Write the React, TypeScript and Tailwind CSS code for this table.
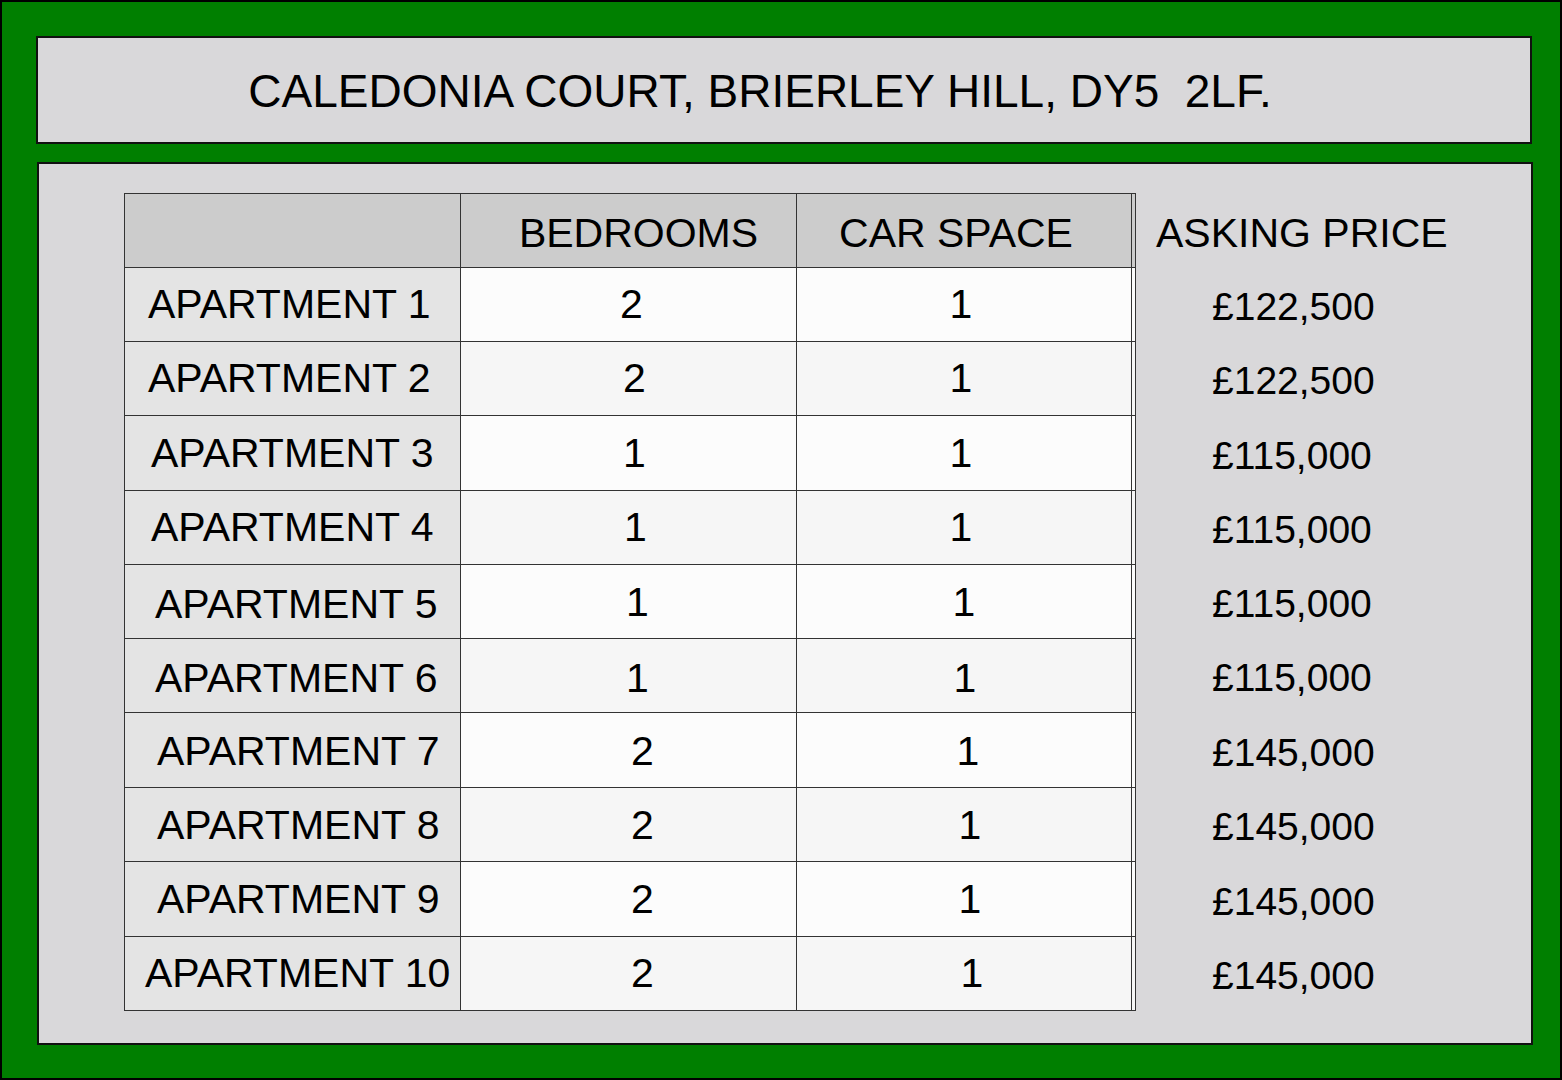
import type { ReactNode } from "react";

interface Apartment {
  name: string;
  bedrooms: string;
  car: string;
  price: string;
  height: string;
  nameCls: string;
  bedCls: string;
  carCls: string;
  rowBg: string;
}

const apartments: Apartment[] = [
  { name: "APARTMENT 1", bedrooms: "2", car: "1", price: "£122,500", height: "h-[74px]", nameCls: "pl-[23px]", bedCls: "pl-[6px]", carCls: "pr-[6px]", rowBg: "bg-[#fcfcfc]" },
  { name: "APARTMENT 2", bedrooms: "2", car: "1", price: "£122,500", height: "h-[74px]", nameCls: "pl-[23px]", bedCls: "pl-[12px]", carCls: "pr-[6px]", rowBg: "bg-[#f6f6f6]" },
  { name: "APARTMENT 3", bedrooms: "1", car: "1", price: "£115,000", height: "h-[75px]", nameCls: "pl-[26px]", bedCls: "pl-[12px]", carCls: "pr-[6px]", rowBg: "bg-[#fcfcfc]" },
  { name: "APARTMENT 4", bedrooms: "1", car: "1", price: "£115,000", height: "h-[74px]", nameCls: "pl-[26px]", bedCls: "pl-[14px]", carCls: "pr-[6px]", rowBg: "bg-[#f6f6f6]" },
  { name: "APARTMENT 5", bedrooms: "1", car: "1", price: "£115,000", height: "h-[74px]", nameCls: "pl-[30px] pt-[6px]", bedCls: "pl-[18px] pt-[2px]", carCls: "pr-[0px] pt-[2px]", rowBg: "bg-[#fcfcfc]" },
  { name: "APARTMENT 6", bedrooms: "1", car: "1", price: "£115,000", height: "h-[74px]", nameCls: "pl-[30px] pt-[6px]", bedCls: "pl-[18px] pt-[6px]", carCls: "pl-[2px] pt-[6px]", rowBg: "bg-[#f6f6f6]" },
  { name: "APARTMENT 7", bedrooms: "2", car: "1", price: "£145,000", height: "h-[75px]", nameCls: "pl-[32px] pt-[3px]", bedCls: "pl-[28px] pt-[3px]", carCls: "pl-[8px] pt-[3px]", rowBg: "bg-[#fcfcfc]" },
  { name: "APARTMENT 8", bedrooms: "2", car: "1", price: "£145,000", height: "h-[74px]", nameCls: "pl-[32px] pt-[2px]", bedCls: "pl-[28px] pt-[2px]", carCls: "pl-[12px] pt-[2px]", rowBg: "bg-[#f6f6f6]" },
  { name: "APARTMENT 9", bedrooms: "2", car: "1", price: "£145,000", height: "h-[75px]", nameCls: "pl-[32px]", bedCls: "pl-[28px]", carCls: "pl-[12px]", rowBg: "bg-[#fcfcfc]" },
  { name: "APARTMENT 10", bedrooms: "2", car: "1", price: "£145,000", height: "h-[74px]", nameCls: "pl-[20px]", bedCls: "pl-[28px]", carCls: "pl-[16px]", rowBg: "bg-[#f6f6f6]" },
];

const Cell = ({ className, children }: { className: string; children?: ReactNode }) => (
  <div className={`flex items-center border-r border-b border-[#333333] ${className}`}>{children}</div>
);

const App = () => {
  return (
    <div
      className="flex h-[1080px] w-[1562px] flex-col border-2 border-black bg-[#007f00] pt-[34px] pl-[34px] text-black"
      style={{ fontFamily: '"Liberation Sans", Arial, sans-serif' }}
    >
      <div className="flex h-[108px] w-[1496px] items-center justify-center border-2 border-[#111] bg-[#d9d8da] pr-[48px] pt-[2px]">
        <h1 className="whitespace-pre text-[46px] leading-none">CALEDONIA COURT, BRIERLEY HILL, DY5  2LF.</h1>
      </div>

      <div className="mt-[18px] ml-[1px] h-[883px] w-[1496px] border-2 border-[#111] bg-[#d9d8da] pt-[29px] pl-[85px]">
        <div className="flex flex-col text-[41px] leading-none">
          <div className="flex h-[75px]">
            <Cell className="w-[337px] border-t border-l bg-[#cccccc]" />
            <Cell className="w-[336px] justify-center border-t bg-[#cccccc] pl-[20px] pt-[6px]">BEDROOMS</Cell>
            <Cell className="w-[335px] justify-center border-t bg-[#cccccc] pr-[16px] pt-[6px]">CAR SPACE</Cell>
            <Cell className="w-[4px] border-t bg-[#cccccc]" />
            <div className="flex items-center pl-[20px] pt-[6px]">ASKING PRICE</div>
          </div>
          {apartments.map((apt) => (
            <div key={apt.name} className={`flex ${apt.height}`}>
              <Cell className={`w-[337px] border-l bg-[#e4e4e4] ${apt.nameCls}`}>{apt.name}</Cell>
              <Cell className={`w-[336px] justify-center ${apt.rowBg} ${apt.bedCls}`}>{apt.bedrooms}</Cell>
              <Cell className={`w-[335px] justify-center ${apt.rowBg} ${apt.carCls}`}>{apt.car}</Cell>
              <Cell className={`w-[4px] ${apt.rowBg}`} />
              <div className="flex items-center pl-[76px] pt-[3px] text-[39px]">{apt.price}</div>
            </div>
          ))}
        </div>
      </div>
    </div>
  );
};

export default App;
